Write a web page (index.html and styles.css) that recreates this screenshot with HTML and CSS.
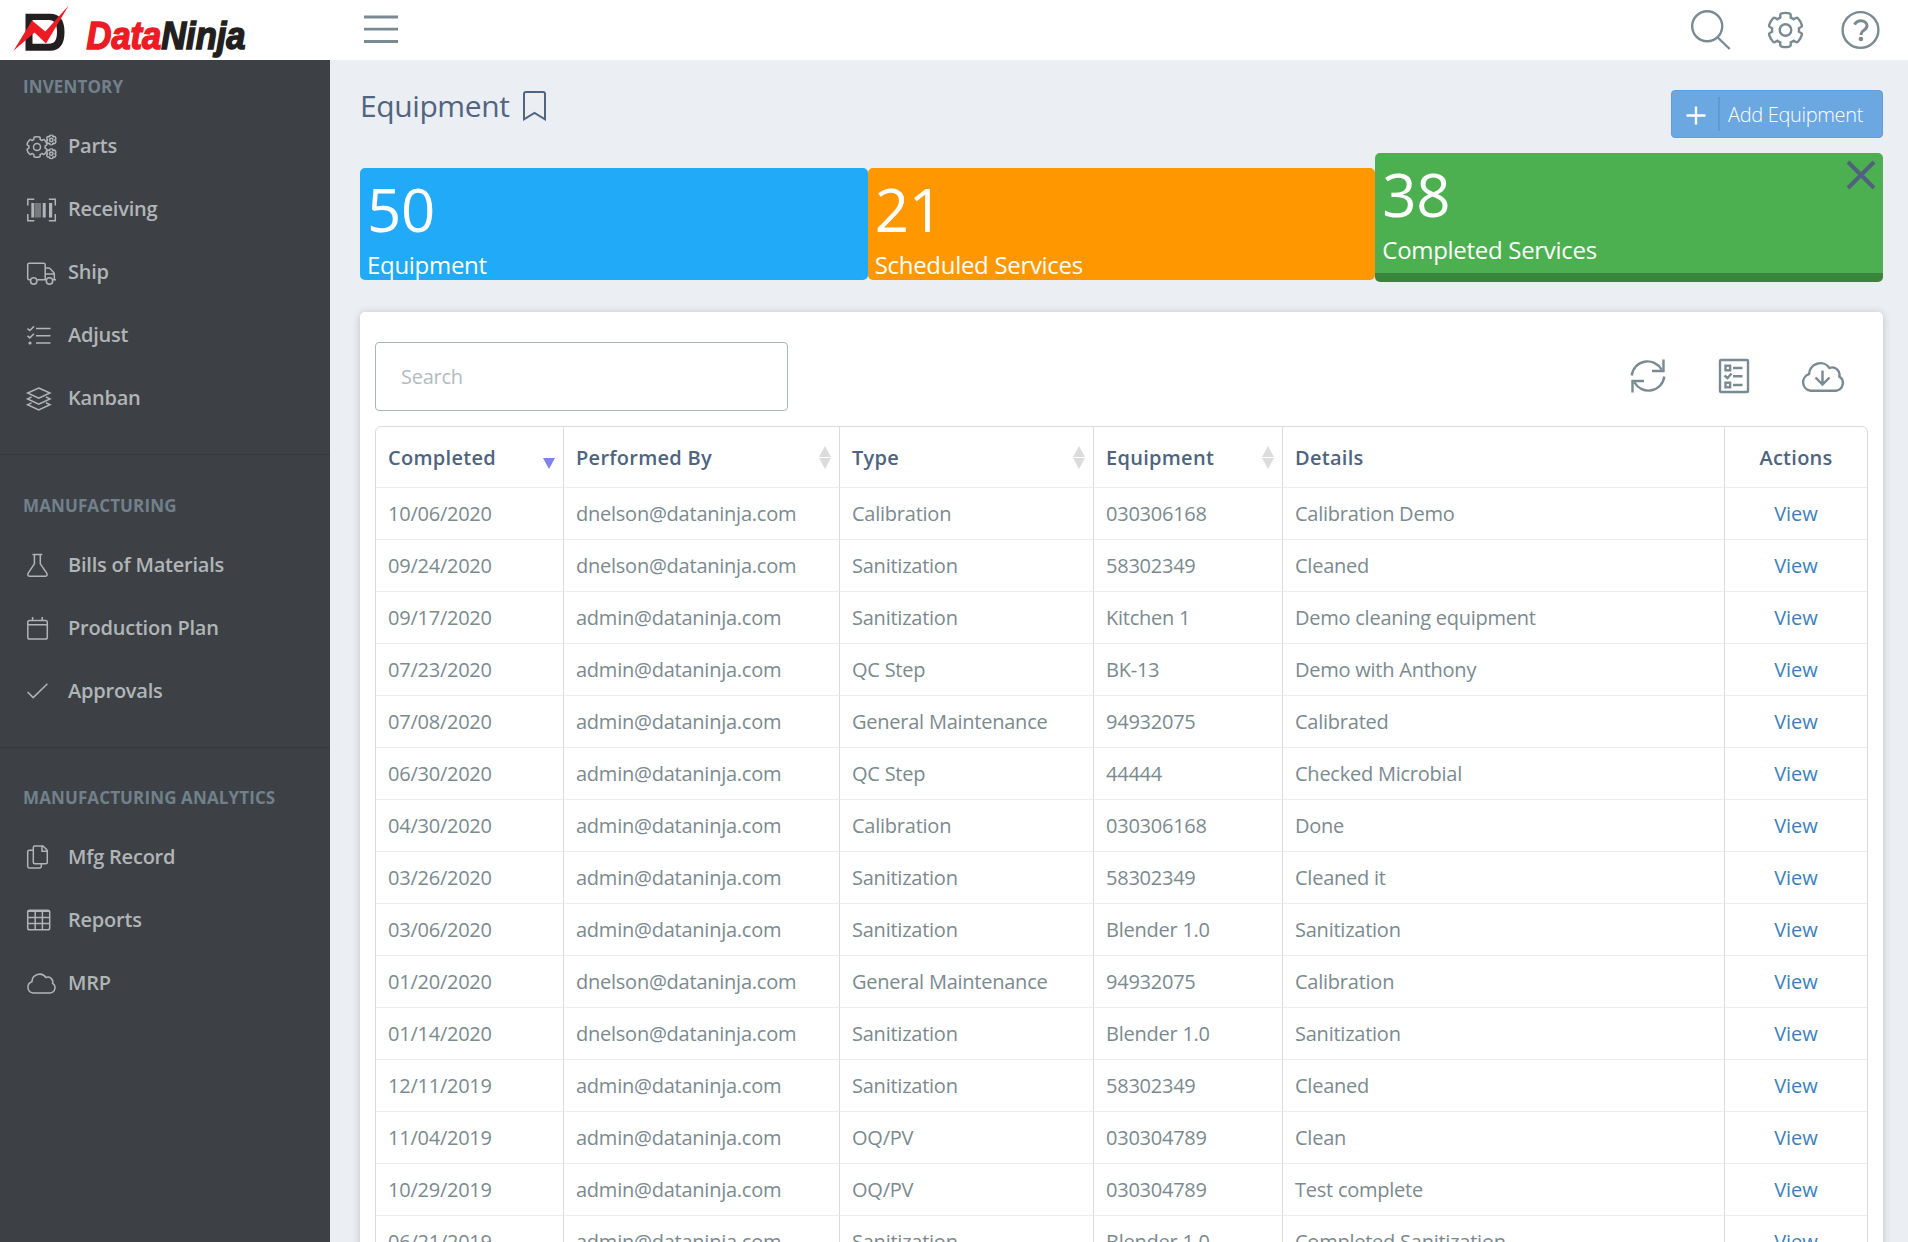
FILE: index.html
```html
<!DOCTYPE html>
<html lang="en">
<head>
  <meta charset="UTF-8" />
  <meta name="viewport" content="width=device-width, initial-scale=1.0"/>
  <title>DataNinja - Equipment</title>
  <link rel="stylesheet" href="styles.css">
</head>
<body>
  <svg class="sprite" aria-hidden="true">
    <symbol id="gear" viewBox="-20 -20 552 552">
      <path vector-effect="non-scaling-stroke" d="M482.7 299.3l-32.6-18.8a195 195 0 0 0 0-48.9l32.6-18.9c9.6-5.5 14.2-16.9 11-27.5-11.2-37.7-31.1-71.7-57.5-99.6-7.6-8-19.8-9.8-29.4-4.2l-32.6 18.8a194 194 0 0 0-42.3-24.5V38c0-11-7.7-20.700-18.500-23.300-37.600-8.900-77.100-8.900-114.800 0-10.800 2.600-18.500 12.200-18.500 23.300v37.700a194 194 0 0 0-42.300 24.500L105.200 81.400c-9.600-5.600-21.800-3.800-29.400 4.200-26.400 27.900-46.300 61.900-57.500 99.600-3.200 10.600 1.400 22 11 27.500l32.600 18.900a195 195 0 0 0 0 48.900l-32.600 18.800c-9.600 5.500-14.200 16.900-11 27.500 11.200 37.700 31.100 71.700 57.500 99.600 7.600 8 19.800 9.800 29.400 4.200l32.600-18.800a194 194 0 0 0 42.300 24.500V474c0 11 7.700 20.700 18.500 23.300 37.600 8.900 77.100 8.900 114.800 0 10.800-2.600 18.500-12.200 18.500-23.300v-37.700a194 194 0 0 0 42.300-24.500l32.600 18.800c9.600 5.600 21.800 3.800 29.400-4.200 26.400-27.900 46.300-61.900 57.500-99.600 3.200-10.600-1.400-22-11-27.500z"/>
      <circle vector-effect="non-scaling-stroke" cx="256" cy="256" r="84"/>
    </symbol>
    <symbol id="cloud" viewBox="0 0 44 31">
      <path vector-effect="non-scaling-stroke" d="M9.500 29.700 A8.500 8.500 0 0 1 8 13.200 A11.300 11.300 0 0 1 28.500 7 A7.300 7.300 0 0 1 38.300 15.600 A7.700 7.700 0 0 1 35 29.700 Z"/>
    </symbol>
  </svg>

  <header class="topbar">
    <div class="brand">
      <svg width="260" height="60" viewBox="0 0 260 60">
        <path fill="#231f20" fill-rule="evenodd" d="M25.500 13.700H50C60 13.700 64.500 20 64.500 32S60 50.700 50 50.700H25.500Z M32.500 20V43.800H49C54.500 43.800 57 40 57 32S54.500 20 49 20Z"/>
        <path fill="#ed1c24" d="M13.500 50.700L32 20.500L45.300 31.500L68.700 5.500L46 43.500L34.500 32.500Z"/>
        <text x="86.500" y="48.500" textLength="159" lengthAdjust="spacingAndGlyphs"><tspan class="logo-red">Data</tspan><tspan class="logo-black">Ninja</tspan></text>
      </svg>
    </div>
    <svg class="icon menu" width="34" height="30" viewBox="0 0 34 30"><path d="M0 3h34M0 15.200h34M0 27.500h34"/></svg>
    <div class="top-actions">
      <svg class="icon" width="40" height="40" viewBox="0 0 40 40"><circle cx="16.200" cy="16.200" r="15"/><path d="M26.700 27.500l12 11.500"/></svg>
      <svg class="icon" width="38" height="38"><use href="#gear" x="-.5"/></svg>
      <svg class="icon help" width="40" height="40" viewBox="0 0 40 40"><circle cx="19.500" cy="20" r="17.900"/><path class="mark" d="M13.600 14.600C15 11.800 17 10.700 19.700 10.700c3.600 0 6.300 2 6.300 5 0 4.600-5.900 4.300-5.900 8.300v.9"/><circle class="dot" cx="19.900" cy="29" r="2.300"/></svg>
    </div>
  </header>

  <div class="layout">
    <aside class="sidebar">
      <section>
        <h3>Inventory</h3>
        <a><svg viewBox="0 0 30 24"><use href="#gear" x="-1.500" y="0.500" width="23" height="23"/><use href="#gear" x="18.800" y="-0.500" width="11" height="11"/><use href="#gear" x="18.800" y="13.200" width="11" height="11"/></svg>Parts</a>
        <a><svg viewBox="0 0 30 24"><path d="M.8 7.500V1.200h6.500M21.800 1.200h6.500v6.300M28.300 16v6.800h-6.500M7.300 22.800H.8V16"/><path class="solid" d="M4.300 5h3v14.500h-3zM8.500 5h1v14.500h-1zM10.500 5h1v14.500h-1zM12.500 5h1v14.500h-1zM15.700 5h3v14.500h-3zM22 5h3.200v14.500H22z"/></svg>Receiving</a>
        <a><svg viewBox="0 0 30 24"><path d="M3.200 18.800H2.200a1.500 1.500 0 0 1-1.500-1.500V3.700A1.500 1.500 0 0 1 2.200 2.200h14.500a1.500 1.500 0 0 1 1.500 1.500v15.100M10.200 18.800h8.800M18.200 7h3.300a2 2 0 0 1 1.500.6l3.700 3.800c.5.500.6.900.6 1.500v5.900M18.200 13h9M26 18.800h3"/><circle cx="6.700" cy="20" r="3.200"/><circle cx="22.500" cy="20" r="3.200"/></svg>Ship</a>
        <a><svg viewBox="0 0 30 24"><path d="M9 4.500h14.500M9 11.800h14.500M9 19h14.500M.5 4.600l2.300 2 4.200-4.200M.5 11.900l2.300 2L7 9.700"/><circle class="solid" cx="3" cy="19" r="1.600"/></svg>Adjust</a>
        <a><svg viewBox="0 0 30 24"><path d="M11.700 1L23 6 11.700 11.200.600 6zM4.500 10L.6 11.900l11.100 5.200L23 11.900 19 10M4.500 15.800L.6 17.700l11.100 5.200L23 17.700l-4-1.900"/></svg>Kanban</a>
      </section>
      <section>
        <h3>Manufacturing</h3>
        <a><svg viewBox="0 0 30 24"><path d="M5.500.6h9.800M7.400.6v9.200L1.200 19.200c-1 1.600-.1 3 1.500 3h15.500c1.600 0 2.500-1.400 1.500-3L13.300 9.800V.6"/></svg>Bills of Materials</a>
        <a><svg viewBox="0 0 30 24"><rect x=".8" y="3.400" width="19.500" height="18.700" rx="1.800"/><path d="M.8 7.700h19.500M5.600 0v3.400M15.200 0v3.400"/></svg>Production Plan</a>
        <a><svg viewBox="0 0 30 24"><path d="M.6 12l5.600 5.600L20.400 3.700"/></svg>Approvals</a>
      </section>
      <section>
        <h3>Manufacturing Analytics</h3>
        <a><svg viewBox="0 0 30 24"><path d="M6.300 4.200H2.200A1.500 1.500 0 0 0 .7 5.700v14.700a1.500 1.500 0 0 0 1.500 1.500h10.600a1.500 1.500 0 0 0 1.500-1.500v-2.700M7.800 0h8.200l4.300 4.300v11.900a1.500 1.500 0 0 1-1.500 1.500h-11a1.500 1.500 0 0 1-1.500-1.500V1.500A1.500 1.500 0 0 1 7.800 0zM15 0v5.200h5.300"/></svg>Mfg Record</a>
        <a><svg viewBox="0 0 30 24"><rect x=".7" y="1.300" width="22" height="19.500" rx="1.800"/><path d="M.7 2.300h22M.7 8.500h22M.7 14.600h22M8.200 2v18.800M15.400 2v18.800"/></svg>Reports</a>
        <a><svg viewBox="0 0 30 24"><use href="#cloud" x="-.5" y=".5" width="30" height="21.500"/></svg>MRP</a>
      </section>
    </aside>

    <main class="content">
      <div class="page-head">
        <h1>Equipment</h1>
        <svg class="bookmark" width="23" height="30" viewBox="0 0 23 30"><path d="M1 28.300V3A2 2 0 0 1 3 1h17a2 2 0 0 1 2 2v25.300L11.500 22z"/></svg>
        <button class="btn-add">
          <span class="plus"><svg width="20" height="20" viewBox="0 0 20 20"><path d="M10 1.500v18M0.500 10.500h19"/></svg></span>
          Add Equipment
        </button>
      </div>

      <div class="cards">
        <div class="card blue"><strong>50</strong><span>Equipment</span></div>
        <div class="card orange"><strong>21</strong><span>Scheduled Services</span></div>
        <div class="card green active">
          <strong>38</strong><span>Completed Services</span>
          <svg class="close" width="30" height="30" viewBox="0 0 30 30"><path d="M2 2l26 26M28 2L2 28"/></svg>
        </div>
      </div>

      <div class="panel">
        <div class="toolbar">
          <input type="text" placeholder="Search">
          <div class="tools">
            <svg class="icon refresh" width="36" height="36" viewBox="0 0 36 36"><path d="M1.700 17.500A16 16 0 0 1 31.500 11.500M33.500 1.500V13H22M34.300 18.500A16 16 0 0 1 4.500 24.500M2.500 34.500V23H14"/></svg>
            <svg class="icon" width="32" height="36" viewBox="0 0 32 36"><rect x="2" y="2" width="28" height="32" rx="1"/><path d="M15 10h9.500M15 18.300h9.500M15 27h9.500M6.500 17.500l3 2.500 4-4.500"/><rect x="7.500" y="7.700" width="4.600" height="4.600"/><rect x="7.500" y="24.700" width="4.600" height="4.600"/></svg>
            <svg class="icon" width="44" height="31" viewBox="0 0 44 31"><use href="#cloud" width="44" height="31"/><path d="M21.500 9.500V23M14.500 16.500l7 7 7-7"/></svg>
          </div>
        </div>

        <div class="table-wrap">
          <table>
            <colgroup>
              <col class="c-date"><col class="c-user"><col class="c-type"><col class="c-equip"><col class="c-details"><col class="c-actions">
            </colgroup>
            <thead>
              <tr>
                <th class="sort desc">Completed</th>
                <th class="sort">Performed By</th>
                <th class="sort">Type</th>
                <th class="sort">Equipment</th>
                <th>Details</th>
                <th class="center">Actions</th>
              </tr>
            </thead>
            <tbody id="serviceRows"></tbody>
          </table>
        </div>
      </div>
    </main>
  </div>

  <script>
    const services = [
      ["10/06/2020", "dnelson", "Calibration", "030306168", "Calibration Demo"],
      ["09/24/2020", "dnelson", "Sanitization", "58302349", "Cleaned"],
      ["09/17/2020", "admin", "Sanitization", "Kitchen 1", "Demo cleaning equipment"],
      ["07/23/2020", "admin", "QC Step", "BK-13", "Demo with Anthony"],
      ["07/08/2020", "admin", "General Maintenance", "94932075", "Calibrated"],
      ["06/30/2020", "admin", "QC Step", "44444", "Checked Microbial"],
      ["04/30/2020", "admin", "Calibration", "030306168", "Done"],
      ["03/26/2020", "admin", "Sanitization", "58302349", "Cleaned it"],
      ["03/06/2020", "admin", "Sanitization", "Blender 1.0", "Sanitization"],
      ["01/20/2020", "dnelson", "General Maintenance", "94932075", "Calibration"],
      ["01/14/2020", "dnelson", "Sanitization", "Blender 1.0", "Sanitization"],
      ["12/11/2019", "admin", "Sanitization", "58302349", "Cleaned"],
      ["11/04/2019", "admin", "OQ/PV", "030304789", "Clean"],
      ["10/29/2019", "admin", "OQ/PV", "030304789", "Test complete"],
      ["06/21/2019", "admin", "Sanitization", "Blender 1.0", "Completed Sanitization"],
    ];
    const tbody = document.getElementById("serviceRows");
    services.forEach(([date, user, type, equipment, details]) => {
      const row = document.createElement("tr");
      [date, user + "@dataninja.com", type, equipment, details].forEach((value) => {
        const td = document.createElement("td");
        td.textContent = value;
        row.appendChild(td);
      });
      const actions = document.createElement("td");
      actions.classList.add("center");
      const link = document.createElement("a");
      link.textContent = "View";
      actions.appendChild(link);
      row.appendChild(actions);
      tbody.appendChild(row);
    });
  </script>
</body>
</html>
```

FILE: styles.css
```css
* {
  box-sizing: border-box;
}
body {
  margin: 0;
  height: 100vh;
  overflow: hidden;
  display: flex;
  flex-direction: column;
  font-family: "Open Sans", sans-serif;
  font-size: 20px;
  color: #7b8a8f;
  background-color: #ebeef3;
}
svg {
  fill: none;
  stroke: currentColor;
  flex-shrink: 0;
}
.sprite {
  position: absolute;
  width: 0;
  height: 0;
}
.icon {
  color: #7a8a92;
  stroke-width: 2.4px;
}

/* top bar */
.topbar {
  height: 60px;
  flex-shrink: 0;
  display: flex;
  align-items: center;
  background-color: #fff;
  padding-right: 27px;
}
.brand {
  width: 364px;
  height: 60px;
}
.brand svg {
  stroke: none;
}
.brand text {
  font-family: "Liberation Sans", sans-serif;
  font-size: 38.5px;
  font-weight: bold;
  font-style: italic;
  stroke-width: 1.6px;
}
.logo-red {
  fill: #ed1c24;
  stroke: #ed1c24;
}
.logo-black {
  fill: #231f20;
  stroke: #231f20;
}
.menu {
  margin-bottom: 2px;
  stroke-width: 2.8px;
}
.top-actions {
  margin-left: auto;
  padding-bottom: 1px;
  display: flex;
  align-items: center;
  gap: 36px;
}
.help .mark {
  stroke-width: 3px;
}
.help .dot {
  fill: currentColor;
  stroke: none;
}

.layout {
  flex: 1;
  min-height: 0;
  display: flex;
}

/* sidebar */
.sidebar {
  width: 330px;
  flex-shrink: 0;
  background-color: #3d4145;
  overflow: hidden;
}
.sidebar section {
  padding-bottom: 25px;
}
.sidebar section + section {
  border-top: 1px solid #363a3d;
  padding-top: 23.5px;
}
.sidebar h3 {
  height: 54px;
  margin: 0;
  padding-left: 23px;
  font-size: 17px;
  line-height: 53px;
  font-weight: 700;
  letter-spacing: 0.12px;
  text-transform: uppercase;
  color: #72808c;
}
.sidebar a {
  height: 63px;
  padding-left: 27px;
  display: flex;
  align-items: center;
  gap: 11px;
  font-weight: 600;
  letter-spacing: -0.22px;
  color: #b1b5b7;
}
.sidebar a svg {
  width: 30px;
  height: 24px;
  margin-top: 3px;
  overflow: visible;
  stroke-width: 1.5px;
}
.sidebar .solid {
  fill: currentColor;
  stroke: none;
}

/* page */
.content {
  flex: 1;
  min-width: 0;
  padding: 30px 25px 0 30px;
}
.page-head {
  height: 48px;
  display: flex;
  align-items: flex-start;
  color: #50657f;
}
.page-head h1 {
  margin: 0;
  font-size: 30px;
  line-height: 31px;
  font-weight: 400;
  letter-spacing: -0.4px;
}
.bookmark {
  margin: 1px 0 0 14px;
  stroke-width: 2px;
}
.btn-add {
  width: 212px;
  height: 48px;
  margin-left: auto;
  padding: 0 0 0 14px;
  display: flex;
  align-items: center;
  gap: 8px;
  font: 300 20px "Open Sans", sans-serif;
  letter-spacing: -0.33px;
  white-space: nowrap;
  color: #fff;
  background-color: #6ba7e0;
  border: 1px solid #5c9fe0;
  border-radius: 4px;
}
.plus {
  width: 34px;
  height: 34px;
  display: flex;
  align-items: center;
  border-right: 2px solid #5f99d1;
}
.plus svg {
  margin-top: 2px;
  stroke-width: 2.4px;
}

.cards {
  height: 112px;
  margin-top: 30px;
  display: flex;
}
.card {
  flex: 1;
  height: 112px;
  padding-left: 7px;
  overflow: hidden;
  position: relative;
  color: #fff;
  border-radius: 5px;
}
.card strong {
  display: block;
  font-size: 60px;
  line-height: 83px;
  font-weight: 400;
  letter-spacing: -0.3px;
}
.card span {
  display: block;
  font-size: 24px;
  line-height: 28px;
  letter-spacing: -0.3px;
}
.blue {
  background-color: #20aaf7;
}
.orange {
  background-color: #ff9800;
}
.green {
  background-color: #4db050;
}
.card.active {
  height: 129px;
  margin-top: -15px;
  border-bottom: 9px solid #38853b;
}
.close {
  position: absolute;
  top: 7px;
  right: 7px;
  color: #4f617d;
  stroke-width: 4px;
}

/* services table */
.panel {
  height: 1000px;
  margin-top: 32px;
  padding: 30px 15px 0;
  background-color: #fff;
  border-radius: 5px;
  box-shadow: 0 1px 8px rgba(0,0,0,0.2);
}
.toolbar {
  height: 69px;
  display: flex;
  align-items: center;
  justify-content: space-between;
}
.toolbar input {
  width: 413px;
  height: 69px;
  padding: 0 25px;
  font: 400 20px "Open Sans", sans-serif;
  letter-spacing: -0.24px;
  border: 1px solid #aab4b9;
  border-radius: 4px;
}
.toolbar input::placeholder {
  color: #b2bbc0;
}
.tools {
  display: flex;
  align-items: center;
  gap: 51px;
  padding: 0 23px 1px 0;
}
.refresh {
  margin-right: 1px;
}
.table-wrap {
  margin-top: 15px;
  border: 1px solid #d9dbdc;
  border-radius: 6px 6px 0 0;
}
table {
  width: 100%;
  table-layout: fixed;
  border-collapse: separate;
  border-spacing: 0;
}
.c-date { width: 188px; }
.c-user { width: 276px; }
.c-type { width: 254px; }
.c-equip { width: 189px; }
.c-actions { width: 142px; }
th, td {
  height: 52px;
  padding: 0 0 0 12px;
  text-align: left;
  white-space: nowrap;
  letter-spacing: -0.24px;
  border-bottom: 1px solid #ebeced;
  border-right: 1px solid #d9dbdc;
}
th:last-child, td:last-child {
  border-right: none;
}
th {
  height: 61px;
  font-weight: 600;
  letter-spacing: 0.28px;
  color: #4e6480;
  position: relative;
}
.center {
  padding: 0;
  text-align: center;
}
td a {
  letter-spacing: 0;
  color: #3a7fbf;
}
.sort::before, .sort::after {
  content: "";
  position: absolute;
  right: 8px;
  border: 6px solid transparent;
}
.sort::before {
  top: 19px;
  border-top: none;
  border-bottom: 11px solid #dcdcdc;
}
.sort::after {
  top: 31px;
  border-bottom: none;
  border-top: 11px solid #dcdcdc;
}
.sort.desc::before {
  display: none;
}
.sort.desc::after {
  border-top-color: #7f83e6;
}
```
